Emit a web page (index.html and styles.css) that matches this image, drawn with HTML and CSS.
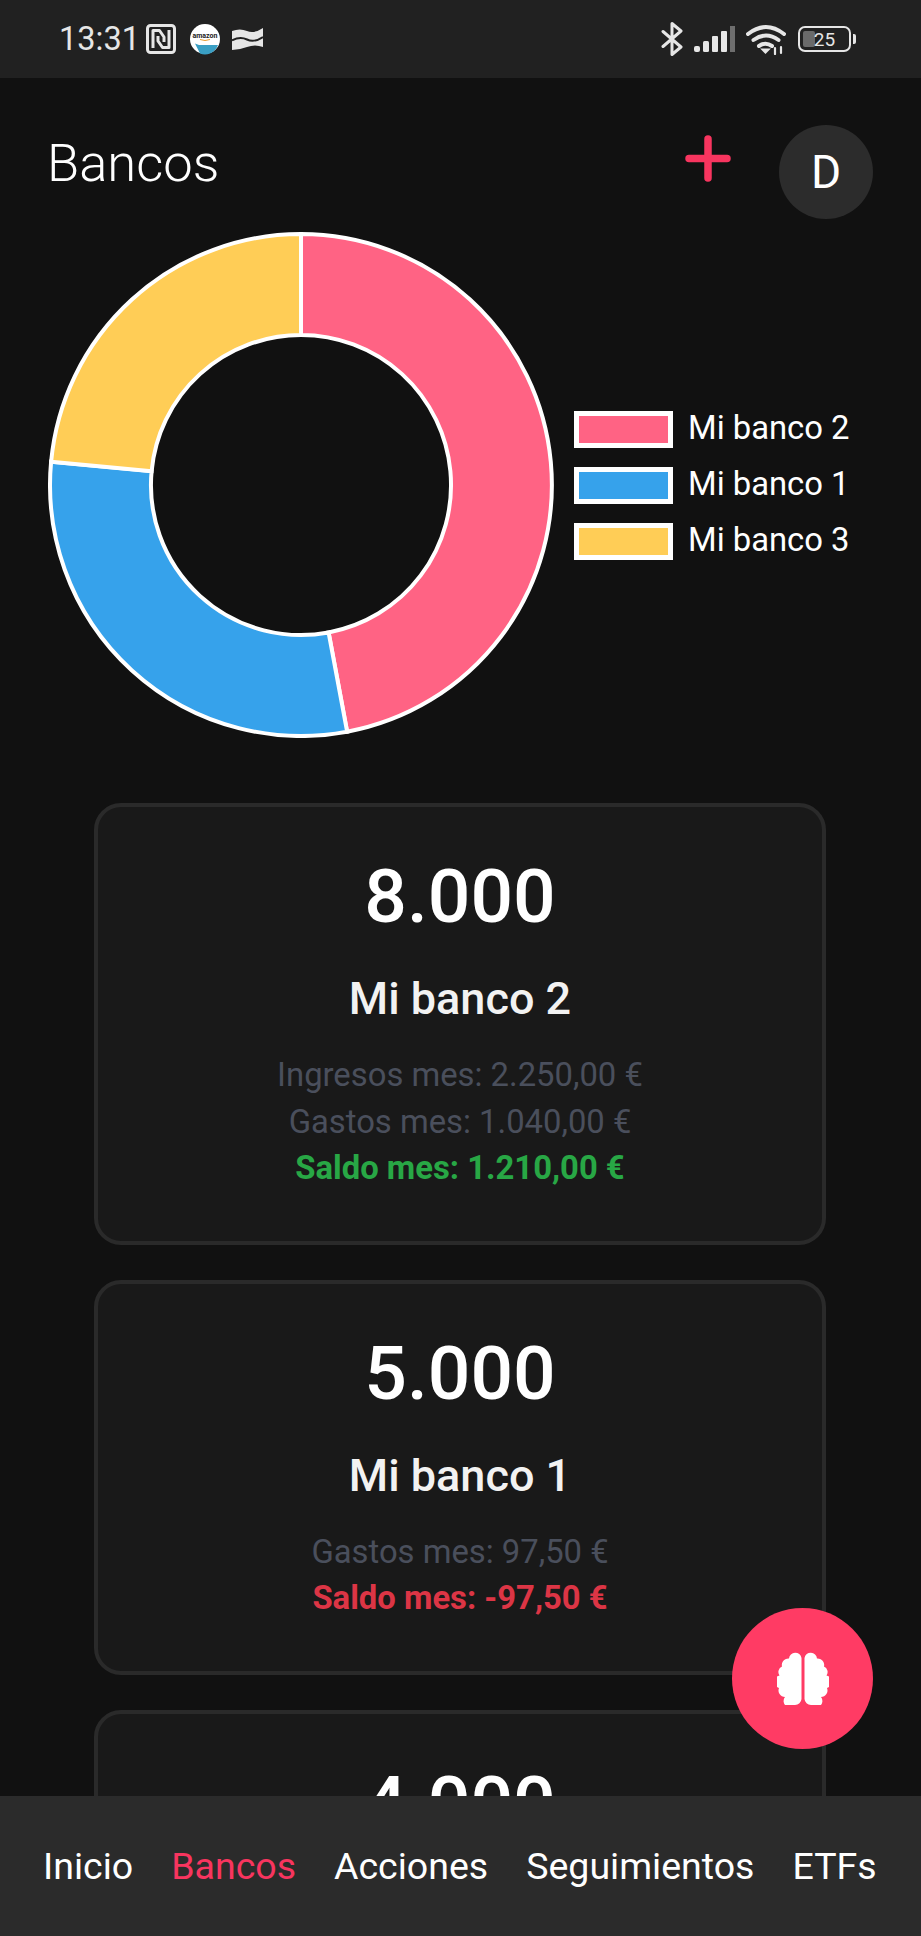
FILE: index.html
```html
<!DOCTYPE html>
<html lang="es">
<head>
    <meta charset="UTF-8">
    <title>Bancos</title>
    <link rel="stylesheet" href="styles.css">
</head>
<body>
    <div class="app">
        <div class="status">
            <div class="status-left">
                <span class="time">13:31</span>
                <svg class="ic-nfc" width="30" height="30" viewBox="0 0 30 30" fill="none" stroke="#e6e6e6" stroke-width="3" stroke-linejoin="round">
                    <rect x="1.500" y="1.500" width="27" height="27" rx="3"/>
                    <path d="M7 24V6.500h6.500L18 13v5M23 6v17.500h-6.500L12 17v-5"/>
                </svg>
                <svg class="ic-amazon" width="30" height="31" viewBox="0 0 30 31">
                    <circle cx="15" cy="15" r="15" fill="#fff"/>
                    <path d="M5 19.500l4 1.500h19a15 15 0 0 1-8 8.500q-5 2-10 0z" fill="#3a9fc4"/>
                    <text x="15" y="14" class="amazon-txt">amazon</text>
                    <path d="M10 15.500q5 2 10 0" fill="none" stroke="#e89a2c" stroke-width="1"/>
                </svg>
                <svg class="ic-wave" width="31" height="24" viewBox="0 0 31 24" fill="#e6e6e6">
                    <path d="M0 4Q8 1 15 4T31 1V20Q23 17 15 20T0 23Z"/>
                    <path d="M0 13.500Q8 9 15 12.500T31 10" fill="none" stroke="#212121" stroke-width="2"/>
                </svg>
            </div>
            <div class="status-right">
                <svg class="ic-bt" width="22" height="34" viewBox="0 0 22 34" fill="none" stroke="#e6e6e6" stroke-width="3" stroke-linejoin="round" stroke-linecap="round">
                    <path d="M2 9.500l18 15.500-9 7.500V1.500l9 7.500L2 24.500"/>
                </svg>
                <svg class="ic-signal" width="41" height="26" viewBox="0 0 41 26">
                    <rect x="0" y="20" width="6" height="6" rx="2" fill="#e6e6e6"/>
                    <rect x="9" y="15" width="6" height="11" rx="1.500" fill="#e6e6e6"/>
                    <rect x="18" y="10" width="6" height="16" rx="1" fill="#e6e6e6"/>
                    <rect x="27" y="5" width="6" height="21" rx="1" fill="#e6e6e6"/>
                    <rect x="36" y="0" width="5" height="26" fill="#6e6e6e"/>
                </svg>
                <svg class="ic-wifi" width="40" height="31" viewBox="0 0 40 31" fill="none" stroke="#e6e6e6" stroke-width="4" stroke-linecap="round">
                    <path d="M2 10q18-14 36 0"/>
                    <path d="M7.500 16q12.500-9 25 0"/>
                    <path d="M13 22q6.500-4.500 13 0"/>
                    <path d="M16.500 25.500l3 3 3-3z" fill="#e6e6e6" stroke-width="2"/>
                    <path d="M29 24v6M35 23v6" stroke-width="2.200"/>
                </svg>
                <div class="battery">
                    <div class="battery-body">
                        <span class="battery-fill"></span>
                        <span class="battery-num">25</span>
                    </div>
                    <span class="battery-nub"></span>
                </div>
            </div>
        </div>

        <div class="main">
            <div class="head">
                <h1 class="title">Bancos</h1>
                <div class="head-actions">
                    <svg class="ic-plus" width="46" height="47" viewBox="0 0 46 47" fill="none" stroke="#f8355f" stroke-width="7.500" stroke-linecap="round">
                        <path d="M23 4v39M4 23.500h38"/>
                    </svg>
                    <div class="avatar">D</div>
                </div>
            </div>

            <div class="chart">
                <svg class="donut" width="506" height="506" viewBox="-253 -253 506 506" stroke="#fff" stroke-width="4">
                    <path fill="#ff6384" d="M0-251A251 251 0 0 1 46.130 246.700L27.570 147.450A150 150 0 0 0 0-150Z"/>
                    <path fill="#36a2eb" d="M46.130 246.700A251 251 0 0 1-249.900-23.200L-149.400-13.840A150 150 0 0 0 27.570 147.450Z"/>
                    <path fill="#ffcd56" d="M-249.900-23.200A251 251 0 0 1 0-251L0-150A150 150 0 0 0-149.400-13.840Z"/>
                </svg>
                <ul class="legend">
                    <li><span class="swatch pink"></span><span class="legend-txt">Mi banco 2</span></li>
                    <li><span class="swatch blue"></span><span class="legend-txt">Mi banco 1</span></li>
                    <li><span class="swatch yellow"></span><span class="legend-txt">Mi banco 3</span></li>
                </ul>
            </div>

            <div class="cards">
                <div class="card">
                    <div class="amount">8.000</div>
                    <div class="name">Mi banco 2</div>
                    <div class="row">Ingresos mes: 2.250,00 €</div>
                    <div class="row">Gastos mes: 1.040,00 €</div>
                    <div class="row good">Saldo mes: 1.210,00 €</div>
                </div>
                <div class="card">
                    <div class="amount">5.000</div>
                    <div class="name">Mi banco 1</div>
                    <div class="row">Gastos mes: 97,50 €</div>
                    <div class="row bad">Saldo mes: -97,50 €</div>
                </div>
                <div class="card">
                    <div class="amount">4.000</div>
                </div>
            </div>

            <div class="fab">
                <svg width="52" height="53" viewBox="0 0 52 53" fill="#fff">
                    <path d="M24.500 6A6.300 6.300 0 0 0 12 6.500 6.500 6.500 0 0 0 5 14.500 6 6 0 0 0 2.500 23.500 6.500 6.500 0 0 0 2 36 6.500 6.500 0 0 0 8 45 6 6 0 0 0 18 53 6.500 6.500 0 0 0 24.500 47Z"/>
                    <path d="M24.500 6A6.300 6.300 0 0 0 12 6.500 6.500 6.500 0 0 0 5 14.500 6 6 0 0 0 2.500 23.500 6.500 6.500 0 0 0 2 36 6.500 6.500 0 0 0 8 45 6 6 0 0 0 18 53 6.500 6.500 0 0 0 24.500 47Z" transform="matrix(-1 0 0 1 52 0)"/>
                </svg>
            </div>
        </div>

        <div class="tabs">
            <span class="tab">Inicio</span>
            <span class="tab active">Bancos</span>
            <span class="tab">Acciones</span>
            <span class="tab">Seguimientos</span>
            <span class="tab">ETFs</span>
        </div>
    </div>
</body>
</html>
```

FILE: styles.css
```css
*{
    margin:0;
    padding:0;
    box-sizing:border-box;
}
body{
    background:#111;
    font-family:Roboto,"Liberation Sans",sans-serif;
    color:#fff;
}
.app{
    width:921px;
    height:1936px;
    display:flex;
    flex-direction:column;
    overflow:hidden;
}

/* barra de estado */
.status{
    height:78px;
    background:#212121;
    display:flex;
    justify-content:space-between;
    align-items:center;
    padding:0 65px 0 59px;
    flex:none;
}
.status-left,.status-right{
    display:flex;
    align-items:center;
}
.time{
    font-size:32.500px;
    color:#e6e6e6;
    width:87px;
}
.ic-amazon{
    margin-left:14px;
}
.amazon-txt{
    font-size:7px;
    font-weight:700;
    text-anchor:middle;
    fill:#222;
}
.ic-wave{
    margin-left:12px;
}
.ic-signal{
    margin-left:11px;
}
.ic-wifi{
    margin-left:11px;
}
.battery{
    margin-left:12px;
    display:flex;
    align-items:center;
}
.battery-body{
    width:53px;
    height:26px;
    border:2.500px solid #e6e6e6;
    border-radius:7px;
    position:relative;
    display:flex;
    align-items:center;
    justify-content:center;
}
.battery-fill{
    position:absolute;
    left:3px;
    top:3px;
    bottom:3px;
    width:12px;
    background:#6a6a6a;
    border-radius:2px;
}
.battery-num{
    position:relative;
    font-size:19px;
    color:#e6e6e6;
}
.battery-nub{
    width:3px;
    height:10px;
    margin-left:2px;
    background:#e6e6e6;
    border-radius:0 2px 2px 0;
}

/* contenido */
.main{
    flex:1;
    position:relative;
    overflow:hidden;
    padding-top:47px;
}
.head{
    display:flex;
    justify-content:space-between;
    align-items:flex-start;
    padding:0 48px 0 47px;
}
.title{
    font-size:52.500px;
    font-weight:300;
    line-height:56px;
    margin-top:10px;
}
.head-actions{
    display:flex;
    align-items:flex-start;
    gap:48px;
}
.ic-plus{
    margin-top:10px;
}
.avatar{
    width:94px;
    height:94px;
    border-radius:50%;
    background:#2c2c2c;
    font-size:46px;
    display:flex;
    align-items:center;
    justify-content:center;
}

.chart{
    display:flex;
    align-items:center;
    gap:20px;
    padding-left:48px;
    margin-top:13px;
}
.donut{
    display:block;
    flex:none;
}
.legend{
    list-style:none;
    display:flex;
    flex-direction:column;
    gap:19px;
}
.legend li{
    display:flex;
    align-items:center;
    height:37px;
}
.legend-txt{
    font-size:32.800px;
    line-height:33px;
    margin-bottom:2px;
}
.swatch{
    width:99px;
    height:37px;
    border:5px solid #fff;
    margin-right:15px;
}
.pink{
    background:#ff6384;
}
.blue{
    background:#36a2eb;
}
.yellow{
    background:#ffcd56;
}

.cards{
    margin:65px 95px 0 94px;
    display:flex;
    flex-direction:column;
    gap:35px;
}
.card{
    background:#191919;
    border:4px solid #2a2a2a;
    border-radius:27px;
    text-align:center;
    padding:45px 0 49px;
}
.amount{
    font-size:75px;
    font-weight:500;
    line-height:88px;
}
.name{
    font-size:45px;
    font-weight:500;
    line-height:48px;
    color:#f2f2f2;
    margin:35px 0 29px;
}
.row{
    font-size:32.800px;
    line-height:46.500px;
    color:#4a4f5c;
}
.row.good{
    color:#28a745;
    font-weight:700;
}
.row.bad{
    color:#dc3545;
    font-weight:700;
}

.fab{
    position:absolute;
    left:732px;
    top:1530px;
    width:141px;
    height:141px;
    border-radius:50%;
    background:#ff3b64;
    display:flex;
    align-items:center;
    justify-content:center;
}

/* pestañas */
.tabs{
    height:140px;
    flex:none;
    background:#2b2b2b;
    display:flex;
    align-items:center;
    gap:38px;
    padding:0 0 0 43px;
    position:relative;
}
.tab{
    font-size:37.500px;
    white-space:nowrap;
}
.tab.active{
    color:#f8355f;
}
```
